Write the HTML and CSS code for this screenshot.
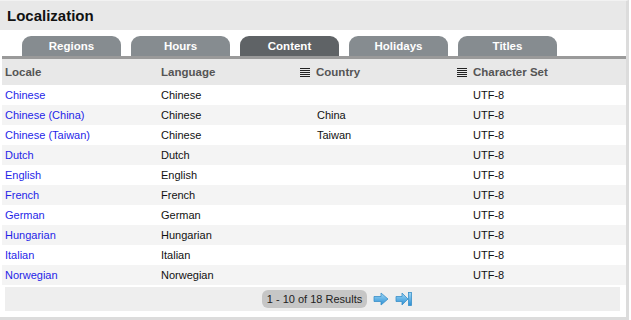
FILE: index.html
```html
<!DOCTYPE html>
<html lang="en">
<head>
    <meta charset="UTF-8">
    <title>Localization</title>
    <link rel="stylesheet" href="styles.css">
</head>
<body>
    <div class="panel">
        <div class="panel-title">Localization</div>
        <div class="panel-body">
            <div class="tabs">
                <div class="tab">Regions</div>
                <div class="tab">Hours</div>
                <div class="tab active">Content</div>
                <div class="tab">Holidays</div>
                <div class="tab">Titles</div>
            </div>
            <table class="grid">
                <thead>
                    <tr>
                        <th class="col-locale">Locale</th>
                        <th class="col-lang">Language</th>
                        <th class="col-country"><span class="sort-icon"></span>Country</th>
                        <th class="col-charset"><span class="sort-icon"></span>Character Set</th>
                    </tr>
                </thead>
                <tbody>
                    <tr><td><a href="#">Chinese</a></td><td>Chinese</td><td></td><td>UTF-8</td></tr>
                    <tr><td><a href="#">Chinese (China)</a></td><td>Chinese</td><td>China</td><td>UTF-8</td></tr>
                    <tr><td><a href="#">Chinese (Taiwan)</a></td><td>Chinese</td><td>Taiwan</td><td>UTF-8</td></tr>
                    <tr><td><a href="#">Dutch</a></td><td>Dutch</td><td></td><td>UTF-8</td></tr>
                    <tr><td><a href="#">English</a></td><td>English</td><td></td><td>UTF-8</td></tr>
                    <tr><td><a href="#">French</a></td><td>French</td><td></td><td>UTF-8</td></tr>
                    <tr><td><a href="#">German</a></td><td>German</td><td></td><td>UTF-8</td></tr>
                    <tr><td><a href="#">Hungarian</a></td><td>Hungarian</td><td></td><td>UTF-8</td></tr>
                    <tr><td><a href="#">Italian</a></td><td>Italian</td><td></td><td>UTF-8</td></tr>
                    <tr><td><a href="#">Norwegian</a></td><td>Norwegian</td><td></td><td>UTF-8</td></tr>
                </tbody>
            </table>
            <div class="pager">
                <span class="pager-info">1 - 10 of 18 Results</span>
                <a class="pager-btn" href="#" title="Next">
                    <svg width="16" height="14" viewBox="0 0 16 14">
                        <defs>
                            <linearGradient id="g1" x1="0" y1="0" x2="0" y2="1">
                                <stop offset="0" stop-color="#9fd8f7"/>
                                <stop offset="1" stop-color="#2b8fd4"/>
                            </linearGradient>
                        </defs>
                        <path d="M1 4.5 H8 V1 L15 7 L8 13 V9.5 H1 Z" fill="url(#g1)" stroke="#3a8fc8" stroke-width="0.8"/>
                    </svg>
                </a>
                <a class="pager-btn" href="#" title="Last">
                    <svg width="18" height="14" viewBox="0 0 18 14">
                        <defs>
                            <linearGradient id="g2" x1="0" y1="0" x2="0" y2="1">
                                <stop offset="0" stop-color="#9fd8f7"/>
                                <stop offset="1" stop-color="#2b8fd4"/>
                            </linearGradient>
                        </defs>
                        <path d="M1 4.5 H7 V1 L13 7 L7 13 V9.5 H1 Z" fill="url(#g2)" stroke="#3a8fc8" stroke-width="0.8"/>
                        <rect x="13.5" y="0.5" width="3" height="13" fill="url(#g2)" stroke="#3a8fc8" stroke-width="0.8"/>
                    </svg>
                </a>
            </div>
        </div>
    </div>
</body>
</html>
```

FILE: styles.css
```css
body {
    margin: 0;
    background: #fff;
    font-family: "Liberation Sans", Arial, sans-serif;
    font-size: 11px;
    color: #111;
}
.panel {
    width: 626px;
    height: 316px;
    border-right: 3px solid #dcdcdc;
    border-bottom: 3px solid #dcdcdc;
    border-top: 1px solid #f2f2f2;
    background: #fff;
}
.panel-title {
    height: 29px;
    line-height: 29px;
    background: #e8e8e8;
    padding-left: 7px;
    font-size: 15px;
    font-weight: bold;
    color: #111;
}
.panel-body {
    padding: 6px 0 0 2px;
}
.tabs {
    display: flex;
    gap: 10px;
    padding-left: 20px;
    border-bottom: 3px solid #9a9a9a;
}
.tab {
    width: 99px;
    height: 20px;
    line-height: 21px;
    text-align: center;
    background: #868c90;
    color: #fff;
    font-weight: bold;
    font-size: 11.5px;
    border-radius: 9px 9px 0 0;
}
.tab.active {
    background: #5f6366;
}
.grid {
    width: 624px;
    border-collapse: collapse;
    table-layout: fixed;
}
.grid th {
    height: 26px;
    background: #e8e8e8;
    color: #555;
    font-weight: bold;
    text-align: left;
    padding: 0 0 0 3px;
    font-size: 11.5px;
}
.grid td {
    height: 20px;
    padding: 0 0 0 3px;
}
.grid tbody tr:nth-child(even) td {
    background: #f4f4f4;
}
.col-locale { width: 153px; }
.col-lang { width: 139px; }
.col-country { width: 157px; }
.grid th.col-country,
.grid th.col-charset {
    padding-left: 0;
}
.sort-icon {
    display: inline-block;
    width: 10px;
    height: 9px;
    margin-right: 6px;
    vertical-align: -1px;
    background: repeating-linear-gradient(#222 0 1px, transparent 1px 2px);
}
.grid td:nth-child(3) {
    padding-left: 17px;
}
.grid td:nth-child(4) {
    padding-left: 16px;
}
.grid a {
    color: #1f1fe8;
    text-decoration: none;
}
.pager {
    margin: 2px 6px 0 3px;
    height: 24px;
    background: #eeeeee;
    display: flex;
    align-items: center;
    justify-content: center;
    gap: 6px;
    padding-left: 50px;
}
.pager-info {
    background: #c6c6c6;
    border-radius: 6px;
    padding: 3px 5px;
    color: #222;
}
.pager-btn {
    display: flex;
}
```
